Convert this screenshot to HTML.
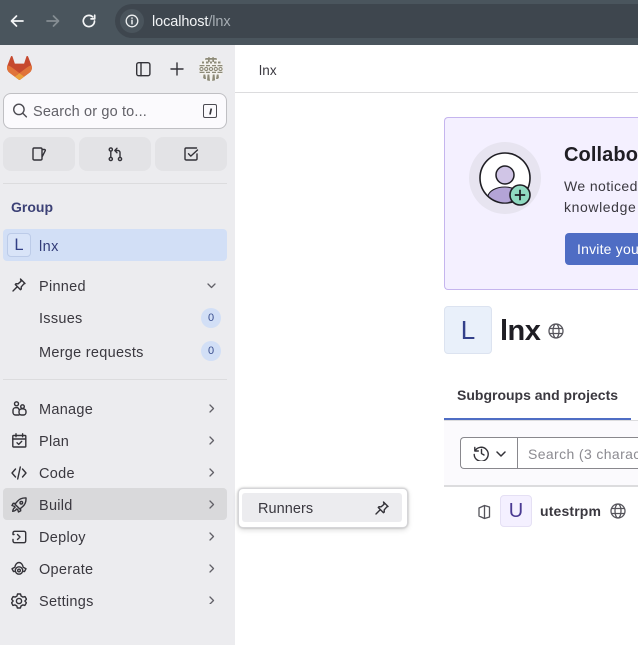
<!DOCTYPE html>
<html lang="en"><head><meta charset="utf-8"><title>lnx</title>
<style>
html,body{margin:0;padding:0;background:#fff;width:638px;height:645px;overflow:hidden}
body{position:relative;font-family:"Liberation Sans",sans-serif;color:#3a383f}
.a{position:absolute}
.t{position:absolute;white-space:nowrap;line-height:20px;height:20px;font-size:14.5px;letter-spacing:.28px}
svg{position:absolute;overflow:hidden}
.i{fill:none;stroke:#333238;stroke-width:1.4;stroke-linecap:round;stroke-linejoin:round}
.btn{position:absolute;top:137px;width:72px;height:34px;background:#e3e3e6;border-radius:8px}
.chev{fill:none;stroke:#626168;stroke-width:1.3;stroke-linecap:round;stroke-linejoin:round}
.badge{position:absolute;left:201px;width:20px;height:20px;border-radius:50%;background:#d2dff6;color:#3b4f8f;font-size:11px;line-height:20px;text-align:center}
</style></head><body>

<!-- browser chrome -->
<div class="a" style="left:0;top:0;width:638px;height:45px;background:#4a555d"></div>
<div class="a" style="left:115px;top:4px;width:523px;height:34px;border-radius:17px 0 0 17px;background:#3e464e"></div>
<div class="a" style="left:120px;top:9px;width:24px;height:24px;border-radius:50%;background:#4a545c"></div>
<svg style="left:0;top:0" width="140" height="44" fill="none" stroke-linecap="round" stroke-linejoin="round">
<path d="M23 21H11.500M16.500 16l-5 5 5 5" stroke="#f4f5f6" stroke-width="1.700"/>
<path d="M47 21h11M53.500 16l5 5-5 5" stroke="#858d93" stroke-width="1.700"/>
<path d="M94.500 21a5.600 5.600 0 1 1-1.800-4.100M94.700 15.200v3.700H91" stroke="#f4f5f6" stroke-width="1.700"/>
<circle cx="132" cy="21" r="5.800" stroke="#eef0f1" stroke-width="1.300"/>
<path d="M132 20.300v3.500" stroke="#eef0f1" stroke-width="1.500"/><path d="M132 18v.1" stroke="#eef0f1" stroke-width="1.600"/>
</svg>
<div class="t" style="left:152px;top:12px;font-size:14.500px;letter-spacing:-.1px;color:#f2f4f6">localhost<span style="color:#a6adb3">/lnx</span></div>

<!-- sidebar -->
<div class="a" style="left:0;top:45px;width:235px;height:600px;background:#ececef"></div>
<div class="a" style="left:235px;top:92px;width:403px;height:1px;background:#dcdcde"></div>
<div class="t" style="left:259px;top:61px;font-size:13.500px;letter-spacing:.2px;color:#3a383f">lnx</div>

<!-- logo -->
<svg style="left:7px;top:56px" width="25" height="24" viewBox="0 0 25 24">
<path fill="#c6492e" d="m24.507 9.500-.034-.09L21.082.562a.896.896 0 0 0-1.694.091l-2.290 7.010H7.825L5.535.653a.898.898 0 0 0-1.694-.09L.451 9.411.416 9.500a6.297 6.297 0 0 0 2.090 7.278l.012.010.030.022 5.160 3.867 2.560 1.935 1.554 1.176a1.051 1.051 0 0 0 1.268 0l1.555-1.176 2.560-1.935 5.197-3.890.014-.010A6.297 6.297 0 0 0 24.507 9.500Z"/>
<path fill="#e0733a" d="m24.507 9.500-.034-.09a11.440 11.440 0 0 0-4.560 2.051l-7.447 5.632 4.742 3.584 5.197-3.890.014-.010A6.297 6.297 0 0 0 24.507 9.500Z"/>
<path fill="#eaa03c" d="m7.707 20.677 2.560 1.935 1.555 1.176a1.051 1.051 0 0 0 1.268 0l1.555-1.176 2.560-1.935-4.743-3.584-4.755 3.584Z"/>
<path fill="#e0733a" d="M5.010 11.461a11.430 11.430 0 0 0-4.560-2.050L.416 9.500a6.297 6.297 0 0 0 2.090 7.278l.012.010.030.022 5.160 3.867 4.745-3.584-7.444-5.632Z"/>
</svg>

<!-- top icons -->
<svg style="left:136px;top:62px" width="15" height="15" class="i"><rect x=".7" y=".7" width="13.200" height="13" rx="2"/><path d="M5 .7v13"/></svg>
<svg style="left:170px;top:62px" width="14" height="14" class="i"><path d="M7 1v12M1 7h12"/></svg>
<svg style="left:199px;top:57px" width="24" height="24" viewBox="0 0 24 24">
<defs><clipPath id="c"><circle cx="12" cy="12" r="12"/></clipPath></defs>
<circle cx="12" cy="12" r="12" fill="#f3f2ee"/>
<g clip-path="url(#c)">
<g fill="#8d8a78">
<path d="M6 1h12v1.800H6zM9 0h1.700v5H9zM13.300 0H15v5h-1.700z"/>
<path d="M3 4.500h2v2H3zM7 4.500h2.500v2H7zM11 4.500h2v2h-2zM15 4.500h2.500v2H15zM19 4.500h2.500v2H19z"/>
<path d="M0 8h5.500v1.300H0zM7 8h4v1.300H7zM13 8h4v1.300h-4zM18.500 8H24v1.300h-5.500z"/>
<path d="M0 14.700h5.500V16H0zM7 14.700h4V16H7zM13 14.700h4V16h-4zM18.500 14.700H24V16h-5.500z"/>
<path d="M4.500 17.500H6.300L7 22H4zM8.500 17.500h1.800L11 24H8zM13.800 17.500h1.800l.5 6.500h-3zM17.800 17.500h1.800l.4 4.500h-3z"/>
</g>
<g fill="none" stroke="#8d8a78" stroke-width="1.100">
<circle cx="2.500" cy="12" r="1.600"/><circle cx="7.200" cy="12" r="1.600"/><circle cx="12" cy="12" r="1.600"/><circle cx="16.800" cy="12" r="1.600"/><circle cx="21.500" cy="12" r="1.600"/>
</g>
</g>
</svg>

<!-- search -->
<div class="a" style="left:3px;top:93px;width:222px;height:34px;background:#fbfafd;border:1px solid #bfbfc3;border-radius:8px"></div>
<svg style="left:12px;top:103px" width="16" height="16" fill="none" stroke="#4c4b52" stroke-width="1.400" stroke-linecap="round"><circle cx="6.900" cy="6.400" r="5.200"/><path d="M10.800 10.300l3.600 3.600"/></svg>
<div class="t" style="left:33px;top:102px;color:#626168;font-size:14.500px;letter-spacing:.15px">Search or go to...</div>
<div class="a" style="left:203px;top:104px;width:12px;height:12px;border:1.400px solid #4c4b52;border-radius:2px"></div>
<svg style="left:203px;top:104px" width="15" height="15"><path d="M8.300 4.500l-1.300 6" stroke="#333238" stroke-width="1.700" fill="none"/></svg>

<!-- 3 buttons -->
<div class="btn" style="left:3px"></div><div class="btn" style="left:79px"></div><div class="btn" style="left:155px"></div>
<svg style="left:32px;top:147px" width="15" height="15" class="i"><path d="M1 2.200A1.200 1.200 0 0 1 2.200 1h6.600A1.200 1.200 0 0 1 10 2.200v9.600A1.200 1.200 0 0 1 8.800 13H2.200A1.200 1.200 0 0 1 1 11.800zM10 2.500h2.600a.8.8 0 0 1 .7 1.100L10 10"/></svg>
<svg style="left:108px;top:147px" width="15" height="15" class="i"><circle cx="2.800" cy="2.500" r="1.600"/><circle cx="2.800" cy="12" r="1.600"/><circle cx="12" cy="12" r="1.600"/><path d="M2.800 4.200v6.100M12 10.300V5.500a2 2 0 0 0-2-2H7.500M9 1.200L6.800 3.500 9 5.800"/></svg>
<svg style="left:184px;top:147px" width="15" height="15" class="i"><path d="M13 7v4.800a1.200 1.200 0 0 1-1.200 1.200H2.200A1.200 1.200 0 0 1 1 11.800V2.200A1.200 1.200 0 0 1 2.200 1h10.300"/><path d="M4.500 6.800l2.300 2.300L13.500 3"/></svg>

<div class="a" style="left:3px;top:183px;width:224px;height:1px;background:#dcdcde"></div>
<div class="t" style="left:11px;top:197px;font-weight:bold;font-size:14px;letter-spacing:0;color:#3c4176">Group</div>

<!-- lnx row -->
<div class="a" style="left:3px;top:229px;width:224px;height:32px;background:#d2dff6;border-radius:4px"></div>
<div class="a" style="left:7px;top:233px;width:22px;height:22px;border:1px solid #bccbe8;border-radius:4px;background:#d9e4f8;color:#323f86;font-size:16.500px;line-height:23px;text-align:center">L</div>
<div class="t" style="left:39px;top:237px;color:#323b78;letter-spacing:.45px">lnx</div>

<!-- pinned -->
<svg style="left:12px;top:278px" width="14" height="14" viewBox="0 0 14 14" class="i"><path d="M8.500 1l4.500 4.500-1.200.4-2.600 3 .1 2.100-.8.700-5.200-5.200.7-.8 2.100.1 3-2.600zM4.700 9.300L1 13"/></svg>
<div class="t" style="left:39px;top:277px">Pinned</div>
<svg style="left:207px;top:283px" width="9" height="6"><path class="chev" d="M1 1l3.500 3.500L8 1"/></svg>
<div class="t" style="left:39px;top:309px">Issues</div><div class="badge" style="top:308px">0</div>
<div class="t" style="left:39px;top:343px">Merge requests</div><div class="badge" style="top:341px">0</div>
<div class="a" style="left:3px;top:379px;width:224px;height:1px;background:#dcdcde"></div>

<!-- build hover -->
<div class="a" style="left:3px;top:488px;width:224px;height:32px;background:#d9d9db;border-radius:4px"></div>

<!-- nav -->
<div class="t" style="left:39px;top:400px">Manage</div>
<div class="t" style="left:39px;top:432px">Plan</div>
<div class="t" style="left:39px;top:464px">Code</div>
<div class="t" style="left:39px;top:496px">Build</div>
<div class="t" style="left:39px;top:528px">Deploy</div>
<div class="t" style="left:39px;top:560px">Operate</div>
<div class="t" style="left:39px;top:592px">Settings</div>
<svg style="left:209px;top:404px" width="6" height="200"><g class="chev"><path d="M1 1l3.500 3.500L1 8"/><path d="M1 33l3.500 3.500L1 40"/><path d="M1 65l3.500 3.500L1 72"/><path d="M1 97l3.500 3.500L1 104"/><path d="M1 129l3.500 3.500L1 136"/><path d="M1 161l3.500 3.500L1 168"/><path d="M1 193l3.500 3.500L1 200"/></g></svg>

<svg style="left:12px;top:401px" width="15" height="15" class="i"><circle cx="4.500" cy="2.800" r="2"/><circle cx="10.500" cy="5.600" r="1.800"/><path d="M1 12V9a2.500 2.500 0 0 1 2.500-2.300h2A2.500 2.500 0 0 1 7 8.500M7 10.500C7 8.800 8.200 7.800 10.500 7.800S14 8.800 14 10.500v1a2.500 2.500 0 0 1-2.500 2.500h-2A2.500 2.500 0 0 1 7 11.500zM1 11.500A2.500 2.500 0 0 0 3.500 14H7"/></svg>
<svg style="left:12px;top:433px" width="15" height="15" class="i"><rect x=".8" y="2.500" width="13" height="11.500" rx=".8"/><path d="M.8 6h13M4 .8v3M10.600 .8v3M5 9.800l1.700 1.600 3-3"/></svg>
<svg style="left:11px;top:466px" width="16" height="14" class="i"><path d="M4.500 3L1 7l3.500 4M11.500 3L15 7l-3.500 4M9.300 1L6.700 13"/></svg>
<svg style="left:11px;top:497px" width="16" height="16" class="i"><path d="M15 1c-3.500-.2-6.500 1-8.500 3.200L4 7.200 8.800 12l3-2.500C14 7.500 15.200 4.500 15 1zM4.400 6.500L2.200 6.300 1 8.500l2.800.9M9.500 11.600l.2 2.200-2.200 1.200-.9-2.800M4 10.500c-1.300.5-2 1.800-2.300 3.800 2-.3 3.300-1 3.800-2.300"/><circle cx="10.300" cy="5.700" r="1.300"/></svg>
<svg style="left:12px;top:530px" width="15" height="14" class="i"><path d="M1 4.500V3A1.700 1.700 0 0 1 2.700 1.300H12A1.700 1.700 0 0 1 13.700 3v8A1.700 1.700 0 0 1 12 12.700H2.700A1.700 1.700 0 0 1 1 11V9.500M1 4.500h1M5.500 4.500L8 7 5.500 9.500"/></svg>
<svg style="left:11px;top:561px" width="16" height="15" class="i"><path d="M3.300 10.500H2.500L1 7.800l2.800-1.500C4.300 3.500 6 1.500 8 1.500s3.700 2 4.200 4.800L15 7.800l-1.500 2.700h-.8"/><circle cx="8" cy="9.500" r="3.700"/><circle cx="8" cy="9.500" r="1.300"/></svg>
<svg style="left:11px;top:593px" width="16" height="16" class="i"><path d="M6.500 1h3l.6 2 1.900 1.100 2-.5 1.500 2.600L13.900 8l1.500 1.800-1.500 2.600-2-.5-1.900 1.100-.6 2h-3l-.6-2-1.900-1.100-2 .5L.6 9.800 2.100 8 .6 6.200l1.500-2.600 2 .5L6 3z"/><circle cx="8" cy="8" r="2.600"/></svg>

<!-- popup -->
<div class="a" style="left:238px;top:488px;width:168px;height:38px;background:#fff;border:1px solid #d5d5d8;border-radius:5px;box-shadow:0 0 2px rgba(0,0,0,.25),0 2px 6px rgba(0,0,0,.14)"></div>
<div class="a" style="left:242px;top:493px;width:160px;height:29px;background:#ececef;border-radius:3px"></div>
<div class="t" style="left:258px;top:499px;letter-spacing:.05px">Runners</div>
<svg style="left:375px;top:501px" width="14" height="14" viewBox="0 0 14 14" class="i"><path d="M8.500 1l4.500 4.500-1.200.4-2.600 3 .1 2.100-.8.700-5.200-5.200.7-.8 2.100.1 3-2.600zM4.700 9.300L1 13"/></svg>

<!-- banner -->
<div class="a" style="left:444px;top:117px;width:193px;height:171px;background:#f4f0ff;border:1px solid #c5b5ee;border-right:0;border-radius:4px 0 0 4px"></div>
<svg style="left:469px;top:142px" width="72" height="72" viewBox="0 0 72 72">
<circle cx="36" cy="36" r="36" fill="#e7e4f0"/>
<circle cx="36" cy="36" r="25" fill="#fff" stroke="#1f1e24" stroke-width="1.600"/>
<path d="M19 54c1-5 8-9 17-9 7 0 13 3 15 8-4 5-9 8-15 8-6 0-13-3-17-7z" fill="#b3a4d6" stroke="#1f1e24" stroke-width="1.100"/>
<circle cx="36" cy="33" r="9" fill="#d0c5e6" stroke="#1f1e24" stroke-width="1.500"/>
<circle cx="51" cy="53" r="10" fill="#8fd9c0" stroke="#1f1e24" stroke-width="1.600"/>
<path d="M51 47.800v10.400M45.800 53h10.400" stroke="#1f1e24" stroke-width="1.800" fill="none"/>
</svg>
<div class="t" style="left:564px;top:145px;width:74px;overflow:hidden;font-size:20px;font-weight:bold;letter-spacing:.1px;color:#1f1e24">Collaborate</div>
<div class="t" style="left:564px;top:176px;width:74px;overflow:hidden;color:#3a383f;font-size:14px;letter-spacing:.4px">We noticed that</div>
<div class="t" style="left:564px;top:197px;width:74px;overflow:hidden;color:#3a383f;font-size:14px;letter-spacing:.6px">knowledge</div>
<div class="a" style="left:565px;top:233px;width:73px;height:32px;background:#4f6dc4;border-radius:4px 0 0 4px"></div>
<div class="t" style="left:577px;top:239px;width:61px;overflow:hidden;color:#fff;font-size:14px;letter-spacing:.2px">Invite your</div>

<!-- group header -->
<div class="a" style="left:444px;top:306px;width:46px;height:46px;background:#e9f0fa;border:1px solid #dce3f0;border-radius:4px;color:#33408a;font-size:26px;line-height:47px;text-align:center">L</div>
<div class="t" style="left:500px;top:311px;line-height:40px;height:40px;font-size:29px;font-weight:bold;letter-spacing:-.5px;color:#1f1e24">lnx</div>
<svg style="left:548px;top:323px" width="16" height="16" fill="none" stroke="#55545b" stroke-width="1.300"><circle cx="8" cy="8" r="7"/><ellipse cx="8" cy="8" rx="3" ry="7"/><path d="M1.500 5.500h13M1.500 10.500h13"/></svg>

<!-- tabs -->
<div class="t" style="left:457px;top:385px;font-weight:bold;font-size:14px;letter-spacing:0;color:#3a383f">Subgroups and projects</div>
<div class="a" style="left:444px;top:420px;width:194px;height:66px;background:#fbfafd"></div>
<div class="a" style="left:444px;top:420px;width:194px;height:1px;background:#dcdcde"></div>
<div class="a" style="left:444px;top:418px;width:187px;height:2px;background:#4f6dc4"></div>
<div class="a" style="left:444px;top:485px;width:194px;height:2px;background:#dcdcde"></div>

<!-- filter -->
<div class="a" style="left:460px;top:437px;width:177px;height:30px;background:#fff;border:1px solid #89888d;border-right:0;border-radius:4px 0 0 4px"></div>
<div class="a" style="left:517px;top:437px;width:1px;height:32px;background:#89888d"></div>
<svg style="left:473px;top:445px" width="16" height="16" fill="none" stroke="#333238" stroke-width="1.400" stroke-linecap="round" stroke-linejoin="round"><path d="M1.800 2.500V6h3.500M2 6a7 7 0 1 1-.8 3.500M8.500 4.500V8.500l2.500 1.500"/></svg>
<svg style="left:496px;top:451px" width="10" height="7"><path fill="none" stroke="#333238" stroke-width="1.500" stroke-linecap="round" stroke-linejoin="round" d="M1 1l4 4 4-4"/></svg>
<div class="t" style="left:528px;top:444px;width:110px;overflow:hidden;color:#8c8b91;font-size:14px;letter-spacing:.38px">Search (3 characters)</div>

<!-- row -->
<svg style="left:478px;top:504px" width="13" height="16" fill="none" stroke="#55545b" stroke-width="1.300" stroke-linejoin="round"><path d="M6.500 1.500L1 4v8l5.500 2.500zM6.500 1.500l5 1.500v10l-5 1.500"/></svg>
<div class="a" style="left:500px;top:495px;width:30px;height:30px;background:#f4f0ff;border:1px solid #e5e0f4;border-radius:4px;color:#4a3a92;font-size:20px;line-height:31px;text-align:center">U</div>
<div class="t" style="left:540px;top:501px;font-weight:bold;font-size:14px;letter-spacing:.15px;color:#3a383f">utestrpm</div>
<svg style="left:610px;top:503px" width="16" height="16" fill="none" stroke="#55545b" stroke-width="1.300"><circle cx="8" cy="8" r="7"/><ellipse cx="8" cy="8" rx="3" ry="7"/><path d="M1.500 5.500h13M1.500 10.500h13"/></svg>
</body></html>
